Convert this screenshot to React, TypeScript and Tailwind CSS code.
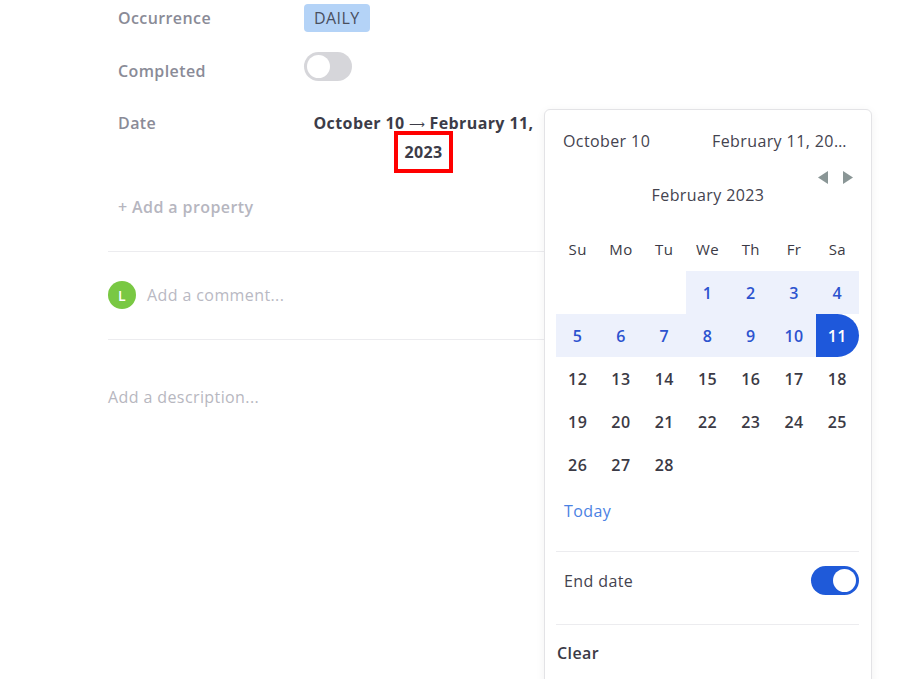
import React from "react";

const font = { fontFamily: '"Open Sans", "Noto Sans", sans-serif' };
const arrowFont = { fontFamily: '"DejaVu Sans", sans-serif' };

const weekdays = ["Su", "Mo", "Tu", "We", "Th", "Fr", "Sa"];

// null = empty slot before the 1st
const days: (number | null)[] = [null, null, null, ...Array.from({ length: 28 }, (_, i) => i + 1)];

const Toggle = ({ on }: { on: boolean }) => (
  <div
    className={`flex h-[29px] w-[48px] items-center rounded-full p-[3px] ${
      on ? "justify-end bg-[#1f5ad9]" : "justify-start bg-[#d6d6da]"
    }`}
  >
    <div className="h-[23px] w-[23px] rounded-full bg-white" />
  </div>
);

const DayCell = ({ day }: { day: number | null }) => {
  if (day === null) return <div className="h-[43px]" />;
  const inRange = day < 11;
  const selected = day === 11;
  let cls = "text-[#3b3a45]";
  if (inRange) cls = "bg-[#edf1fc] text-[#2c53cf]";
  if (selected) cls = "rounded-r-full bg-[#1e58db] text-white";
  return (
    <div className={`flex h-[43px] items-center justify-center text-[16px] font-semibold ${cls}`}>
      {day}
    </div>
  );
};

const DatePicker = () => {
  return (
    <div className="absolute left-[544px] top-[109px] w-[328px] rounded-md border border-[#e3e3e6] bg-white pb-10 shadow-[0_2px_10px_rgba(0,0,0,0.06)]">
      {/* RANGE INPUTS */}
      <div className="flex justify-between pl-[18px] pr-[23px] pt-[19px] text-[16px] leading-6 text-[#44434f]">
        <span>October 10</span>
        <span className="w-[136px] truncate">February 11, 2023</span>
      </div>

      {/* NAV ARROWS */}
      <div className="mt-[18px] flex justify-end gap-[15px] pr-[18px]">
        <svg width="10" height="13" viewBox="0 0 10 13">
          <path d="M10 0 L0 6.5 L10 13 Z" fill="#8a9696" />
        </svg>
        <svg width="10" height="13" viewBox="0 0 10 13">
          <path d="M0 0 L10 6.5 L0 13 Z" fill="#8a9696" />
        </svg>
      </div>

      {/* MONTH */}
      <div className="-mt-px text-center text-[16px] leading-6 text-[#44434f]">February 2023</div>

      {/* GRID */}
      <div className="mt-[21px] pl-[11px] pr-[12px]">
        <div className="grid grid-cols-7">
          {weekdays.map((w) => (
            <div
              key={w}
              className="flex h-[43px] items-center justify-center text-[15px] font-medium text-[#3b3a45]"
            >
              {w}
            </div>
          ))}
          {days.map((d, i) => (
            <DayCell key={i} day={d} />
          ))}
        </div>

        <div className="ml-[8px] mt-[13px] text-[16px] leading-6 text-[#4b82e3]">Today</div>

        <div className="mt-[28px] h-px bg-[#ececef]" />

        {/* END DATE */}
        <div className="mt-[14px] flex h-[29px] items-center justify-between">
          <span className="ml-[8px] text-[16px] text-[#44434f]">End date</span>
          <Toggle on />
        </div>

        <div className="mt-[29px] h-px bg-[#ececef]" />

        <div className="ml-px mt-[16px] text-[16px] font-semibold leading-6 text-[#3b3a45]">Clear</div>
      </div>
    </div>
  );
};

export default function App() {
  return (
    <div
      className="relative h-[679px] w-[907px] overflow-hidden bg-white tracking-[0.4px]"
      style={font}
    >
      <div className="pl-[108px]">
        {/* PROPERTIES */}
        <div className="flex h-9 items-center">
          <div className="w-[196px] pl-[10px] text-[16px] font-semibold text-[#8a8b97]">Occurrence</div>
          <span className="rounded-[4px] bg-[#b4d3f7] px-[10px] text-[16px] font-medium leading-[28px] text-[#4a4f5e]">
            DAILY
          </span>
        </div>

        <div className="mt-3 flex h-[44px] items-center">
          <div className="mt-[2px] w-[196px] pl-[10px] text-[16px] font-semibold text-[#8a8b97]">Completed</div>
          <div className="-mt-[7px]">
            <Toggle on={false} />
          </div>
        </div>

        <div className="mt-[17px] flex">
          <div className="w-[196px] pl-[10px] text-[16px] font-semibold leading-[29px] text-[#8a8b97]">Date</div>
          <div className="w-[239px] text-center text-[16px] font-bold leading-[29px] text-[#3c3c48]">
            October 10{" "}
            <span
              className="relative -top-px text-[11px] font-normal leading-[0] tracking-normal"
              style={arrowFont}
            >
              ⟶
            </span>{" "}
            February 11,{" "}
            <span className="border-4 border-[#ff0000] px-[6px] py-[6px]">2023</span>
          </div>
        </div>

        <div className="mt-[28px] pl-[10px] text-[16px] font-semibold leading-6 text-[#b6b6bf]">
          + Add a property
        </div>

        <div className="mt-8 h-px w-[760px] bg-[#ececef]" />

        {/* COMMENT */}
        <div className="mt-[29px] flex items-center gap-[11px]">
          <div className="flex h-[28px] w-[28px] items-center justify-center rounded-full bg-[#79c843] text-[14px] font-semibold text-white">
            L
          </div>
          <span className="text-[16px] text-[#b9b9c3]">Add a comment...</span>
        </div>

        <div className="mt-[30px] h-px w-[760px] bg-[#ececef]" />

        <div className="mt-[45px] text-[16px] leading-6 text-[#b7b7c0]">Add a description...</div>
      </div>

      <DatePicker />
    </div>
  );
}
